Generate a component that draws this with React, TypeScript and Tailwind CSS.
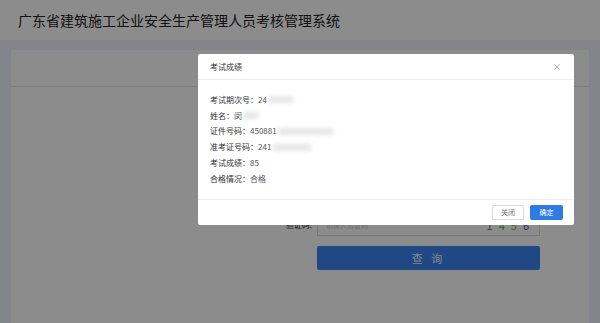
import { X } from 'lucide-react';

const rows = [
  { label: '考试期次号：', value: '24', blur: 26 },
  { label: '姓名：', value: '闵', blur: 16 },
  { label: '证件号码：', value: '450881', blur: 56 },
  { label: '准考证号码：', value: '241', blur: 40 },
  { label: '考试成绩：', value: '85', blur: 0 },
  { label: '合格情况：', value: '合格', blur: 0 },
];

export default function App() {
  return (
    <div
      className="relative w-[600px] h-[323px] overflow-hidden bg-[#eef2fb]"
      style={{ fontFamily: '"Noto Sans CJK SC", "Noto Sans", sans-serif' }}
    >
      {/* header */}
      <div className="h-[40px] bg-white flex items-center pl-[18px] text-[14px] text-[#222]">
        广东省建筑施工企业安全生产管理人员考核管理系统
      </div>

      {/* main panel */}
      <div className="px-[11px] pt-[10px]">
        <div className="bg-white h-[300px]">
          <div className="h-[37px] border-b border-[#e6e6e6]" />
          <div className="pt-[127px]">
            <div className="flex items-center">
              <div className="w-[306px] pr-[5px] text-right text-[8px] text-[#333]">验证码:</div>
              <div className="w-[223px] h-[22px] border border-[#d9d9d9] flex items-center justify-between pl-[8px] pr-[10px]">
                <span className="text-[7px] text-[#ccc]">请输入验证码</span>
                <span className="flex gap-[6px] text-[11px]">
                  <span className="text-[#6a7a8a]">1</span>
                  <span className="text-[#3cc043]">4</span>
                  <span className="text-[#9ab82a]">5</span>
                  <span className="text-[#4a5a9a]">6</span>
                </span>
              </div>
            </div>
            <div className="ml-[306px] mt-[10px] w-[223px] h-[24px] bg-[#3a84f2] rounded-[2px] flex items-center justify-center text-[#eef4ff] text-[11px] tracking-[3px]">
              查 询
            </div>
          </div>
        </div>
      </div>

      {/* mask */}
      <div className="absolute inset-0 bg-black/45" />

      {/* modal */}
      <div className="absolute left-[198px] top-[54px] w-[376px] bg-white rounded-[2px] text-[8px]">
        <div className="h-[26px] border-b border-[#eeeeee] flex items-center justify-between pl-[12px] pr-[12px]">
          <span className="text-[#333]">考试成绩</span>
          <X className="w-[10px] h-[10px] text-[#888]" strokeWidth={1.5} />
        </div>
        <div className="pl-[12px] pt-[12px] pb-[12px]">
          {rows.map((r) => (
            <div key={r.label} className="h-[15.8px] flex items-center text-[#333]">
              <span>{r.label}</span>
              <span className="text-[#555]">{r.value}</span>
              {r.blur > 0 && (
                <span
                  className="inline-block h-[7px] bg-[#e6e6e6] rounded-full blur-[2px] ml-[1px]"
                  style={{ width: r.blur }}
                />
              )}
            </div>
          ))}
        </div>
        <div className="border-t border-[#eeeeee] h-[26px] flex items-center justify-end gap-[6px] pr-[11px]">
          <div className="w-[32px] h-[15px] border border-[#dcdcdc] rounded-[2px] flex items-center justify-center text-[7px] text-[#666]">
            关闭
          </div>
          <div className="w-[33px] h-[15px] bg-[#2f7be5] rounded-[2px] flex items-center justify-center text-[7px] text-white">
            确定
          </div>
        </div>
      </div>
    </div>
  );
}
